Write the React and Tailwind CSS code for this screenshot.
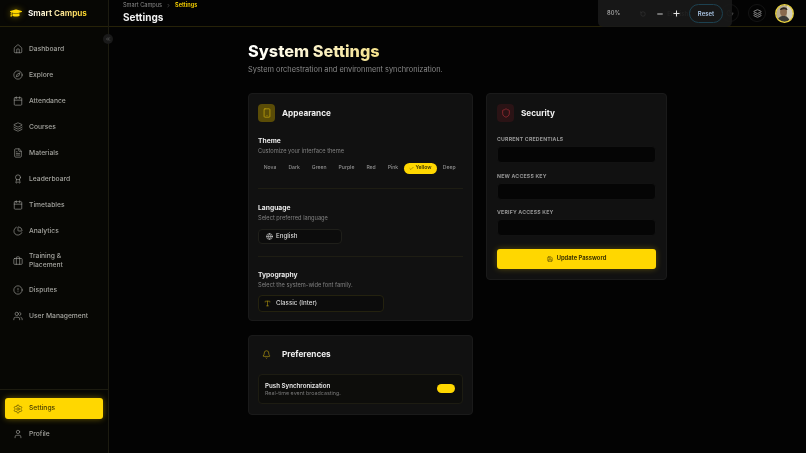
import React from 'react';
import {
  Home, Compass, Calendar, Layers, FileText, Award, PieChart, Briefcase,
  AlertCircle, Users, Settings, User, ChevronRight, ChevronsLeft, Smartphone, Check, Globe, Type, Bell,
  Shield, Save, Minus, Plus, RotateCcw, Moon,
} from 'lucide-react';
import { FaGraduationCap } from 'react-icons/fa';

const navItems = [
  { label: 'Dashboard', icon: Home },
  { label: 'Explore', icon: Compass },
  { label: 'Attendance', icon: Calendar },
  { label: 'Courses', icon: Layers },
  { label: 'Materials', icon: FileText },
  { label: 'Leaderboard', icon: Award },
  { label: 'Timetables', icon: Calendar },
  { label: 'Analytics', icon: PieChart },
  { label: 'Training & Placement', icon: Briefcase },
  { label: 'Disputes', icon: AlertCircle },
  { label: 'User Management', icon: Users },
];

const themes = ['Nova', 'Dark', 'Green', 'Purple', 'Red', 'Pink', 'Yellow', 'Deep'];

function NavItem({ label, icon: Icon, active }) {
  return (
    <div className={active
      ? 'flex items-center gap-[6px] mx-[5px] px-2 h-[21px] rounded-[3px] bg-[#ffd700] text-[#4a3f00] shadow-[0_0_6px_rgba(255,215,0,0.4)]'
      : 'flex items-center gap-[6px] mx-[5px] px-2 py-[6px] rounded-[3px] text-[#a3a39e]'}>
      <Icon size={10} strokeWidth={1.5} className="shrink-0" />
      <span className="text-[6.72px] leading-[8.5px] font-medium">{label}</span>
    </div>
  );
}

function Sidebar() {
  return (
    <aside className="relative w-[109px] h-[453px] shrink-0 flex flex-col bg-[#070704] border-r border-[#1c1b10]">
      <div className="h-[27px] shrink-0 flex items-center gap-[6px] px-[10px] border-b border-[#262208]">
        <FaGraduationCap size={12} className="text-[#ffd700] drop-shadow-[0_0_3px_rgba(255,215,0,0.5)]" />
        <span className="text-[8.16px] font-bold bg-gradient-to-r from-white to-[#ffd700] bg-clip-text text-transparent">Smart Campus</span>
      </div>
      <div className="absolute right-[-5px] top-[34px] w-[10px] h-[10px] rounded-full bg-[#1a1a1a] flex items-center justify-center text-[#777]">
        <ChevronsLeft size={6} />
      </div>
      <nav className="flex-1 flex flex-col gap-[4px] pt-[11px]">
        {navItems.map((item) => <NavItem key={item.label} {...item} />)}
      </nav>
      <div className="flex flex-col gap-[4px] pt-[8px] pb-[8px] border-t border-[#1c1b10]">
        <NavItem label="Settings" icon={Settings} active />
        <NavItem label="Profile" icon={User} />
      </div>
    </aside>
  );
}

function Avatar() {
  return (
    <svg width="19" height="19" viewBox="0 0 19 19" className="shrink-0">
      <clipPath id="face"><circle cx="9.5" cy="9.5" r="8.5" /></clipPath>
      <g clipPath="url(#face)">
        <rect width="19" height="19" fill="#b9ad92" />
        <rect x="12" width="7" height="19" fill="#d6d0bd" />
        <ellipse cx="8.5" cy="8" rx="3.4" ry="4.2" fill="#8a6a4e" />
        <path d="M5 6c0-3 7-4 7.500 0l-1 0c-1-1-4-1-5.500 0z" fill="#2a2420" />
        <path d="M2 19c0-5 3-7 6.500-7s6 2 6.500 7z" fill="#3b3a36" />
      </g>
      <circle cx="9.500" cy="9.500" r="8.800" fill="none" stroke="#e9d23f" strokeWidth="1.300" />
    </svg>
  );
}

function Topbar() {
  return (
    <header className="relative h-[27px] shrink-0 flex items-center justify-between pl-[14px] pr-[12px] border-b border-[#262208]">
      <div className="-mt-[1px]">
        <div className="flex items-center gap-[4px] text-[5.6px] leading-[7px] text-[#8a8a8a]">
          <span>Smart Campus</span>
          <ChevronRight size={5} />
          <span className="font-semibold text-[#ffd700]">Settings</span>
        </div>
        <div className="mt-[1px] text-[10px] leading-[14px] font-bold text-[#f0f0f0]">Settings</div>
      </div>
      <div className="flex items-center gap-[9px] text-[#a8a8a8]">
        <span className="text-[6px] font-medium mr-[24px] text-[#777]">English</span>
        <div className="w-[18px] h-[18px] rounded-full border border-[#141414] flex items-center justify-center text-[#555]">
          <Moon size={8} />
        </div>
        <div className="w-[18px] h-[18px] rounded-full border border-[#141414] flex items-center justify-center">
          <Layers size={9} />
        </div>
        <Avatar />
      </div>
      <div className="absolute right-[74px] top-0 w-[134px] h-[27px] rounded-b-[5px] bg-[#191919]/90 flex items-center pl-[9px] text-[#ececec]">
        <span className="w-[33px] text-[5.8px] font-medium text-[#b0b0b0]">80%</span>
        <RotateCcw size={6} className="text-[#3a3a3a] mr-[10px]" />
        <Minus size={8} strokeWidth={2.5} className="mr-[8px]" />
        <Plus size={9} strokeWidth={2.5} />
        <div className="ml-[8px] w-[34px] h-[19px] rounded-full border border-[#1d4150] flex items-center justify-center text-[6px] font-semibold text-[#a9c4e4]">Reset</div>
      </div>
    </header>
  );
}

function CardTitle({ icon: Icon, tone, size = 10, children }) {
  return (
    <div className="flex items-center gap-[7px]">
      <div className={`w-[17px] h-[18px] rounded-[4px] flex items-center justify-center ${tone}`}>
        <Icon size={size} strokeWidth={1.5} />
      </div>
      <h2 className="text-[8.2px] font-bold text-[#f0f0f0]">{children}</h2>
    </div>
  );
}

function SettingHead({ title, sub }) {
  return (
    <div>
      <div className="text-[6.72px] leading-[9px] font-bold text-[#e8e8e8]">{title}</div>
      <div className="mt-[2px] text-[5.7px] leading-[8px] text-[#808080]">{sub}</div>
    </div>
  );
}

function Field({ label }) {
  return (
    <div>
      <div className="text-[5.2px] leading-[7px] font-bold tracking-[0.2px] text-[#969696]">{label}</div>
      <div className="mt-[3px] h-[17px] rounded-[4px] bg-[#050505] border border-[#121212]" />
    </div>
  );
}

function Appearance() {
  return (
    <section className="rounded-[4px] bg-[#111111] border border-[#1a1a1a] px-[9px] pt-[10px] pb-[8.500px]">
      <CardTitle icon={Smartphone} tone="bg-[#5a4c07] text-[#d8b70d]">Appearance</CardTitle>
      <div className="mt-[13.500px]">
        <SettingHead title="Theme" sub="Customize your interface theme" />
        <div className="mt-[8px] flex items-center gap-[0.500px]">
          {themes.map((t) => t === 'Yellow' ? (
            <span key={t} className="h-[11px] px-[5px] rounded-full bg-[#ffd700] flex items-center gap-[1px] text-[5.1px] font-semibold text-[#3f3500]">
              <Check size={5} />{t}
            </span>
          ) : (
            <span key={t} className="px-[5.750px] text-center text-[5.1px] font-medium text-[#909090]">{t}</span>
          ))}
        </div>
      </div>
      <div className="mt-[14px] border-t border-[#1e1d13]" />
      <div className="mt-[14.500px]">
        <SettingHead title="Language" sub="Select preferred language" />
        <div className="mt-[6.500px] w-[84px] h-[15px] rounded-[4px] bg-[#0c0c0c] border border-[#1f1f1a] flex items-center gap-[3px] pl-[7px] text-[#d8d8d8]">
          <Globe size={7} />
          <span className="text-[6.2px] font-medium">English</span>
        </div>
      </div>
      <div className="mt-[12px] border-t border-[#1e1d13]" />
      <div className="mt-[13.500px]">
        <SettingHead title="Typography" sub="Select the system-wide font family." />
        <div className="mt-[5.500px] w-[126px] h-[17px] rounded-[4px] bg-[#0c0c0c] border border-[#24220f] flex items-center gap-[5px] pl-[5px] text-[#d8d8d8]">
          <Type size={7} className="text-[#b3980f]" />
          <span className="text-[6.2px] font-medium">Classic (Inter)</span>
        </div>
      </div>
    </section>
  );
}

function Preferences() {
  return (
    <section className="mt-[14px] rounded-[4px] bg-[#111111] border border-[#1a1a1a] px-[9px] pt-[9.500px] pb-[10px]">
      <CardTitle icon={Bell} size={9} tone="text-[#c9ab10]">Preferences</CardTitle>
      <div className="mt-[10px] h-[30px] rounded-[4px] bg-[#0d0d0b] border border-[#1d1c12] flex items-center justify-between pl-[6px] pr-[7px]">
        <div>
          <div className="text-[6.2px] leading-[9px] font-semibold text-[#e8e8e8]">Push Synchronization</div>
          <div className="text-[5.35px] leading-[7px] text-[#787878]">Real-time event broadcasting.</div>
        </div>
        <div className="w-[18px] h-[9.500px] rounded-full bg-[#ffd700]" />
      </div>
    </section>
  );
}

function Security() {
  return (
    <section className="rounded-[4px] bg-[#111111] border border-[#1a1a1a] px-[10px] pt-[10px] pb-[10px]">
      <CardTitle icon={Shield} tone="bg-[#2a1315] text-[#b8323c]">Security</CardTitle>
      <div className="mt-[14px] flex flex-col gap-[9.500px]">
        <Field label="CURRENT CREDENTIALS" />
        <Field label="NEW ACCESS KEY" />
        <Field label="VERIFY ACCESS KEY" />
      </div>
      <button className="mt-[12.500px] w-full h-[20.500px] rounded-[3px] bg-[#ffd700] flex items-center justify-center gap-[4px] text-[5.8px] font-bold text-[#3f3500] shadow-[0_0_6px_rgba(255,215,0,0.3)]">
        <Save size={6} />
        Update Password
      </button>
    </section>
  );
}

export default function App() {
  return (
    <div className="w-[806px] h-[453px] overflow-hidden flex bg-[#030303] font-['Inter',sans-serif] antialiased will-change-transform">
      <Sidebar />
      <main className="flex-1 flex flex-col min-w-0">
        <Topbar />
        <div className="pl-[139px] pt-[13px]">
          <h1 className="text-[16.3px] leading-[22px] font-extrabold bg-gradient-to-r from-white to-[#f5e28a] bg-clip-text text-transparent w-fit">System Settings</h1>
          <p className="mt-[2px] text-[7.4px] leading-[11px] text-[#8a8a8a]">System orchestration and environment synchronization.</p>
          <div className="mt-[18px] flex items-start gap-[13px]">
            <div className="w-[225px]">
              <Appearance />
              <Preferences />
            </div>
            <div className="w-[181px]">
              <Security />
            </div>
          </div>
        </div>
      </main>
    </div>
  );
}
